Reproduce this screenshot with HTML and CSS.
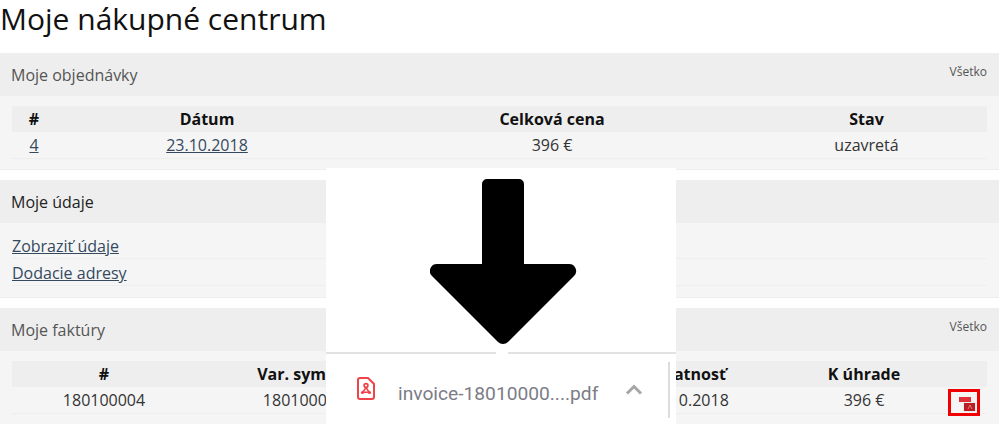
FILE: index.html
```html
<!DOCTYPE html>
<html lang="sk">
<head>
<meta charset="utf-8">
<title>Moje nákupné centrum</title>
<link rel="stylesheet" href="styles.css">
</head>
<body>
<main class="page">
  <h1 class="title">Moje nákupné centrum</h1>

  <section class="panel">
    <header class="panel-head"><h2 class="panel-title">Moje objednávky</h2><a class="all" href="#">Všetko</a></header>
    <div class="panel-body">
      <table class="grid">
        <colgroup><col class="o1"><col class="o2"><col class="o3"><col class="o4"></colgroup>
        <thead><tr><th>#</th><th>Dátum</th><th>Celková cena</th><th>Stav</th></tr></thead>
        <tbody><tr><td><a href="#">4</a></td><td><a href="#">23.10.2018</a></td><td>396 €</td><td>uzavretá</td></tr></tbody>
      </table>
    </div>
  </section>

  <section class="panel">
    <header class="panel-head"><h2 class="panel-title dark">Moje údaje</h2></header>
    <div class="panel-body links-body">
      <ul class="links">
        <li><a href="#">Zobraziť údaje</a></li>
        <li><a href="#">Dodacie adresy</a></li>
      </ul>
    </div>
  </section>

  <section class="panel">
    <header class="panel-head"><h2 class="panel-title">Moje faktúry</h2><a class="all" href="#">Všetko</a></header>
    <div class="panel-body">
      <table class="grid">
        <colgroup><col class="f1"><col class="f2"><col class="f3"><col class="f4"><col class="f5"><col class="f6"></colgroup>
        <thead><tr><th>#</th><th>Var. symbol</th><th>Dátum</th><th>Splatnosť</th><th>K úhrade</th><th></th></tr></thead>
        <tbody><tr><td>180100004</td><td>180100004</td><td>23.10.2018</td><td>30.10.2018</td><td>396 €</td>
          <td class="pdf-cell"><span class="mark"><svg class="pdf-small" width="18" height="16" viewBox="0 0 18 16"><path d="M4 3h10l3 3v9H4z" fill="#ececec"/><rect x="0" y="0" width="12" height="5" fill="#e0303a"/><rect x="5" y="6" width="11" height="8" fill="#bb1c22"/><path d="M9 12l2-4 2 4" fill="none" stroke="#e08080" stroke-width="1"/></svg></span></td></tr></tbody>
      </table>
    </div>
  </section>
</main>

<aside class="download">
  <div class="arrow-area">
    <svg class="arrow" width="148" height="168" viewBox="0 0 148 168"><path d="M57 0h32a5 5 0 0 1 5 5v80h45a7 7 0 0 1 5 12L78 163a7 7 0 0 1-10 0L2 97a7 7 0 0 1 5-12h45V5a5 5 0 0 1 5-5z" fill="#000"/></svg>
  </div>
  <div class="shelf">
    <svg class="doc" width="18" height="23" viewBox="0 0 18 23"><path d="M3 1h8l6 6v13a2 2 0 0 1-2 2H3a2 2 0 0 1-2-2V3a2 2 0 0 1 2-2z" fill="#fff" stroke="#f0424a" stroke-width="2"/><circle cx="9" cy="8.500" r="1.900" fill="none" stroke="#f0424a" stroke-width="1.700"/><circle cx="5.500" cy="15.500" r="1.600" fill="#f0424a"/><circle cx="12.500" cy="15.500" r="1.600" fill="#f0424a"/><path d="M9 10.500l-3 4.500M9 10.500l3 4.500M6 15.300h6" stroke="#f0424a" stroke-width="1.500" fill="none"/></svg>
    <span class="file">invoice-18010000....pdf</span>
    <svg class="chev" width="18" height="11" viewBox="0 0 18 11"><path d="M2 9.500l7-7 7 7" fill="none" stroke="#a6a6a6" stroke-width="3"/></svg>
    <span class="sep"></span>
  </div>
</aside>
</body>
</html>
```
FILE: styles.css
```css
* { box-sizing: border-box; }
html, body { margin: 0; padding: 0; background: #fff; }
body {
  position: relative;
  height: 424px;
  overflow: hidden;
  font-family: "Open Sans", "Liberation Sans", sans-serif;
  font-size: 16px;
  line-height: 20px;
  color: #333;
}
a { color: #34495e; }
.title {
  margin: 0;
  height: 53px;
  font-size: 30px;
  line-height: 38px;
  font-weight: 400;
  color: #111;
}
.panel {
  margin-bottom: 10px;
  background: #f5f5f5;
  border-bottom: 1px solid #eee;
}
.panel-head {
  display: flex;
  justify-content: space-between;
  height: 43px;
  padding: 0 12px 0 11px;
  background: #eee;
}
.panel-title {
  margin: 0;
  font-size: 16px;
  line-height: 44px;
  font-weight: 400;
  color: #555;
}
.panel-title.dark { color: #222; }
.all {
  font-size: 12px;
  line-height: 38px;
  color: #555;
  text-decoration: none;
}
.panel-body { padding: 10px 12px; }
.links-body { padding: 9px 12px 11px; }
.grid {
  width: 975px;
  table-layout: fixed;
  border-collapse: separate;
  border-spacing: 0;
}
.grid th {
  height: 26px;
  padding: 0;
  background: #eee;
  font-weight: 700;
  color: #111;
  text-align: center;
}
.grid td {
  height: 27px;
  padding: 0;
  border-bottom: 1px solid #eee;
  text-align: center;
  vertical-align: middle;
}
.o1 { width: 44px; }
.o2 { width: 302px; }
.o3 { width: 388px; }
.o4 { width: 241px; }
.f1 { width: 184px; }
.f2 { width: 216px; }
.f3 { width: 181px; }
.f4 { width: 190px; }
.f5 { width: 162px; }
.f6 { width: 42px; }
.links { margin: 0; padding: 0; list-style: none; }
.links li {
  height: 27px;
  line-height: 28px;
  border-bottom: 1px solid #eee;
}
.pdf-cell { position: relative; line-height: 0; }
.mark {
  position: absolute;
  left: 3px;
  top: 2px;
  display: flex;
  align-items: center;
  justify-content: center;
  width: 32px;
  height: 27px;
  border: 3px solid #f00000;
}
.pdf-small { margin: 5px 0 0 8px; }
.download {
  position: absolute;
  left: 326px;
  top: 168px;
  width: 350px;
  height: 256px;
  background: #fff;
}
.arrow-area {
  height: 186px;
  padding: 11px 0 0 104px;
  border-bottom: 2px solid #e2e2e2;
  line-height: 0;
}
.arrow { display: block; }
.arrow-area::after {
  content: "";
  position: absolute;
  left: 170px;
  top: 184px;
  width: 12px;
  height: 3px;
  background: #fff;
}
.shelf {
  position: relative;
  display: flex;
  align-items: center;
  height: 70px;
  padding: 0 0 0 31px;
}
.doc { margin: -1px 0 0; }
.file {
  margin: 10px 0 0 23px;
  font-family: "Roboto", "Liberation Sans", sans-serif;
  font-size: 19.2px;
  line-height: 24px;
  color: #7c7c86;
  white-space: nowrap;
}
.chev { margin: 0 0 0 27px; }
.sep {
  position: absolute;
  left: 342px;
  top: 8px;
  width: 2px;
  height: 56px;
  background: #dcdcdc;
}
```
